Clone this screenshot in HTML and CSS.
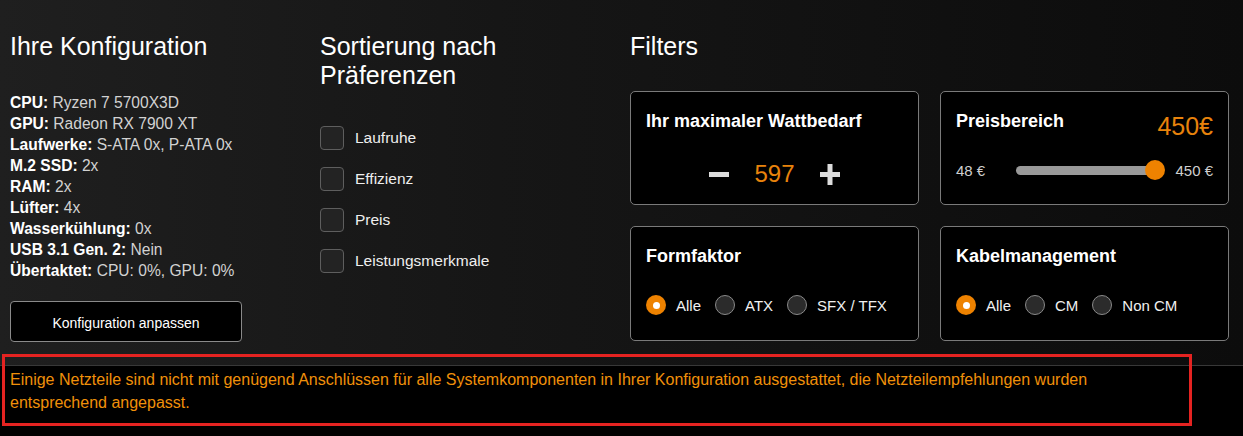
FILE: index.html
```html
<!DOCTYPE html>
<html lang="de">
<head>
<meta charset="utf-8">
<title>Konfiguration</title>
<link rel="stylesheet" href="styles.css">
</head>
<body>
<main class="main">
  <section class="col">
    <h2 class="heading">Ihre Konfiguration</h2>
    <ul class="specs">
      <li><b>CPU:</b> Ryzen 7 5700X3D</li>
      <li><b>GPU:</b> Radeon RX 7900 XT</li>
      <li><b>Laufwerke:</b> S-ATA 0x, P-ATA 0x</li>
      <li><b>M.2 SSD:</b> 2x</li>
      <li><b>RAM:</b> 2x</li>
      <li><b>Lüfter:</b> 4x</li>
      <li><b>Wasserkühlung:</b> 0x</li>
      <li><b>USB 3.1 Gen. 2:</b> Nein</li>
      <li><b>Übertaktet:</b> CPU: 0%, GPU: 0%</li>
    </ul>
    <button class="btn">Konfiguration anpassen</button>
  </section>

  <section class="col">
    <h2 class="heading">Sortierung nach<br>Präferenzen</h2>
    <div class="checks">
      <label class="check"><span class="box"></span>Laufruhe</label>
      <label class="check"><span class="box"></span>Effizienz</label>
      <label class="check"><span class="box"></span>Preis</label>
      <label class="check"><span class="box"></span>Leistungsmerkmale</label>
    </div>
  </section>

  <section class="col">
    <h2 class="heading">Filters</h2>
    <div class="cards">
      <div class="card">
        <div class="card-title">Ihr maximaler Wattbedarf</div>
        <div class="counter">
          <span class="minus"></span>
          <span class="count">597</span>
          <svg class="plus" width="20" height="21" viewBox="0 0 20 21"><rect x="7.5" y="0" width="5" height="21" fill="#dcdcdc"/><rect x="0" y="8" width="20" height="5" fill="#dcdcdc"/></svg>
        </div>
      </div>
      <div class="card">
        <div class="card-head">
          <div class="card-title">Preisbereich</div>
          <div class="price">450€</div>
        </div>
        <div class="slider-row">
          <span class="range-label">48 €</span>
          <div class="slider"><span class="track"></span><span class="thumb"></span></div>
          <span class="range-label">450 €</span>
        </div>
      </div>
      <div class="card">
        <div class="card-title">Formfaktor</div>
        <div class="radios">
          <span class="radio on"></span><span class="rlabel">Alle</span>
          <span class="radio"></span><span class="rlabel">ATX</span>
          <span class="radio"></span><span class="rlabel">SFX / TFX</span>
        </div>
      </div>
      <div class="card">
        <div class="card-title">Kabelmanagement</div>
        <div class="radios">
          <span class="radio on"></span><span class="rlabel">Alle</span>
          <span class="radio"></span><span class="rlabel">CM</span>
          <span class="radio"></span><span class="rlabel">Non CM</span>
        </div>
      </div>
    </div>
  </section>
</main>
<footer class="notice">
  <p>Einige Netzteile sind nicht mit genügend Anschlüssen für alle Systemkomponenten in Ihrer Konfiguration ausgestattet, die Netzteilempfehlungen wurden entsprechend angepasst.</p>
</footer>
<div class="highlight"></div>
</body>
</html>
```
FILE: styles.css
```css
* { box-sizing: border-box; }
html, body { margin: 0; padding: 0; }
body {
  position: relative;
  width: 1243px;
  height: 436px;
  overflow: hidden;
  background: #000;
  font-family: "Liberation Sans", Arial, sans-serif;
  color: #fff;
}
.main {
  display: grid;
  grid-template-columns: 310px 310px 1fr;
  padding: 32px 14px 23px 10px;
  background: linear-gradient(to right, #1f1f1f 0%, #161616 40%, #0c0c0c 100%);
  height: 365px;
}
.col { min-width: 0; }
.heading {
  margin: 0;
  font-size: 25px;
  line-height: 29px;
  font-weight: normal;
  color: #fff;
}
.specs {
  list-style: none;
  margin: 31px 0 0;
  padding: 0;
  font-size: 15.6px;
  line-height: 21px;
  color: #d2d2d2;
}
.specs b { color: #fff; font-weight: bold; }
.btn {
  display: block;
  margin-top: 20px;
  width: 232px;
  height: 41px;
  background: #000;
  border: 1px solid #8a8a8a;
  border-radius: 4px;
  color: #fff;
  font-family: "Liberation Sans", Arial, sans-serif;
  font-size: 14px;
  padding: 2px 0 0;
}
.checks {
  margin-top: 36px;
  display: flex;
  flex-direction: column;
  gap: 17px;
}
.check {
  display: flex;
  align-items: center;
  gap: 11px;
  font-size: 15.5px;
  color: #eee;
  height: 24px;
}
.check-text { padding-top: 2px; }
.box {
  width: 24px;
  height: 24px;
  border: 1.5px solid #5e5e5e;
  border-radius: 4px;
  background: #232323;
}
.cards {
  margin-top: 30px;
  display: grid;
  grid-template-columns: 289px 289px;
  grid-template-rows: 114px 115px;
  column-gap: 21px;
  row-gap: 21px;
}
.card {
  background: #000;
  border: 1px solid #7a7a7a;
  border-radius: 5px;
  padding: 19px 15px 0;
}
.card-title {
  font-size: 18px;
  line-height: 21px;
  font-weight: bold;
  color: #fff;
}
.counter {
  margin-top: 27px;
  height: 30px;
  display: flex;
  align-items: center;
  justify-content: center;
}
.minus {
  width: 20px;
  height: 5px;
  background: #dcdcdc;
}
.count {
  margin: 0 25px;
  font-size: 24px;
  color: #e8830c;
  line-height: 30px;
}
.plus { display: block; }
.card-head {
  display: flex;
  justify-content: space-between;
  align-items: flex-start;
}
.price {
  margin-top: 1px;
  font-size: 25px;
  line-height: 29px;
  color: #e8830c;
}
.slider-row {
  margin-top: 19px;
  height: 20px;
  display: flex;
  align-items: center;
  justify-content: space-between;
}
.range-label {
  font-size: 15px;
  color: #cfcfcf;
}
.slider {
  display: flex;
  align-items: center;
  width: 149px;
  margin: 0 9px 0 29px;
}
.track {
  flex: 1;
  height: 9px;
  border-radius: 5px;
  background: #999;
  margin-right: -10px;
}
.thumb {
  width: 20px;
  height: 20px;
  border-radius: 50%;
  background: #ee8200;
}
.radios {
  margin-top: 28px;
  display: flex;
  align-items: center;
  height: 20px;
  font-size: 15px;
  color: #f0f0f0;
}
.radio {
  width: 20px;
  height: 20px;
  border-radius: 50%;
  border: 1.5px solid #8a8a8a;
  background: #2b2b2b;
  margin-right: 10px;
  display: flex;
  align-items: center;
  justify-content: center;
}
.radio.on {
  border: none;
  background: #ee8200;
}
.radio.on::after {
  content: "";
  width: 7px;
  height: 7px;
  border-radius: 50%;
  background: #fff;
}
.rlabel { margin-right: 14px; }
.notice {
  border-top: 1px solid #383838;
  background: #000;
  height: 71px;
  padding: 2px 10px 0;
}
.notice p {
  margin: 0;
  max-width: 1120px;
  font-size: 16px;
  line-height: 23px;
  color: #f0900a;
}
.highlight {
  position: absolute;
  left: 2px;
  top: 354px;
  width: 1190px;
  height: 72px;
  border: 3px solid #e52321;
  pointer-events: none;
}
```
